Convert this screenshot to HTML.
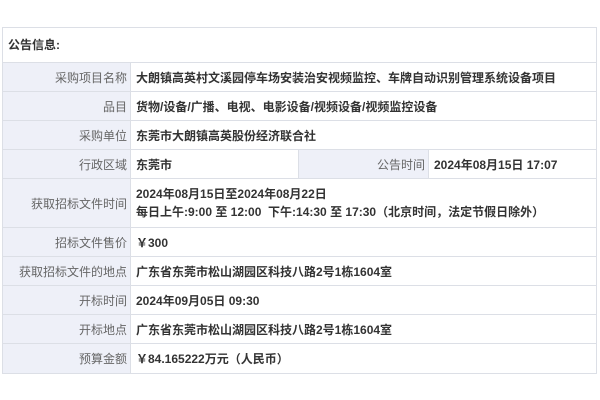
<!DOCTYPE html>
<html><head><meta charset="utf-8"><style>
body{margin:0;background:#fff;width:600px;height:400px;overflow:hidden;font-family:"Liberation Sans","Noto Sans CJK SC",sans-serif;font-size:12px}
.t{position:absolute;left:2px;top:27px;width:595px;border:1px solid #dcdfe6;box-sizing:border-box}
.h{height:34px;line-height:34px;padding-left:5px;font-weight:bold;color:#333;border-bottom:1px solid #dcdfe6}
.r{display:flex;border-bottom:1px solid #dcdfe6;height:29px;box-sizing:border-box}
.r:last-child{border-bottom:none}
.l{width:128px;flex:none;background:#eef0f8;color:#666;text-align:right;padding-right:3px;box-sizing:border-box;border-right:1px solid #dcdfe6;display:flex;align-items:center;justify-content:flex-end}
.v{flex:1;color:#333;font-weight:bold;padding-left:5px;display:flex;align-items:center}
</style></head><body>
<div class="t">
<div class="h">公告信息:</div>
<div class="r"><div class="l">采购项目名称</div><div class="v">大朗镇高英村文溪园停车场安装治安视频监控、车牌自动识别管理系统设备项目</div></div>
<div class="r"><div class="l">品目</div><div class="v">货物/设备/广播、电视、电影设备/视频设备/视频监控设备</div></div>
<div class="r"><div class="l">采购单位</div><div class="v">东莞市大朗镇高英股份经济联合社</div></div>
<div class="r"><div class="l">行政区域</div><div class="v" style="flex:none;width:168px;border-right:1px solid #dcdfe6;box-sizing:border-box">东莞市</div><div class="l" style="width:130px">公告时间</div><div class="v">2024年08月15日 17:07</div></div>
<div class="r" style="height:49px"><div class="l">获取招标文件时间</div><div class="v" style="display:block;padding-top:6px;line-height:18px">2024年08月15日至2024年08月22日<br>每日上午:9:00 至 12:00&nbsp; 下午:14:30 至 17:30（北京时间，法定节假日除外）</div></div>
<div class="r"><div class="l">招标文件售价</div><div class="v">￥300</div></div>
<div class="r"><div class="l">获取招标文件的地点</div><div class="v">广东省东莞市松山湖园区科技八路2号1栋1604室</div></div>
<div class="r"><div class="l">开标时间</div><div class="v">2024年09月05日 09:30</div></div>
<div class="r"><div class="l">开标地点</div><div class="v">广东省东莞市松山湖园区科技八路2号1栋1604室</div></div>
<div class="r"><div class="l">预算金额</div><div class="v">￥84.165222万元（人民币）</div></div>
</div>
</body></html>
